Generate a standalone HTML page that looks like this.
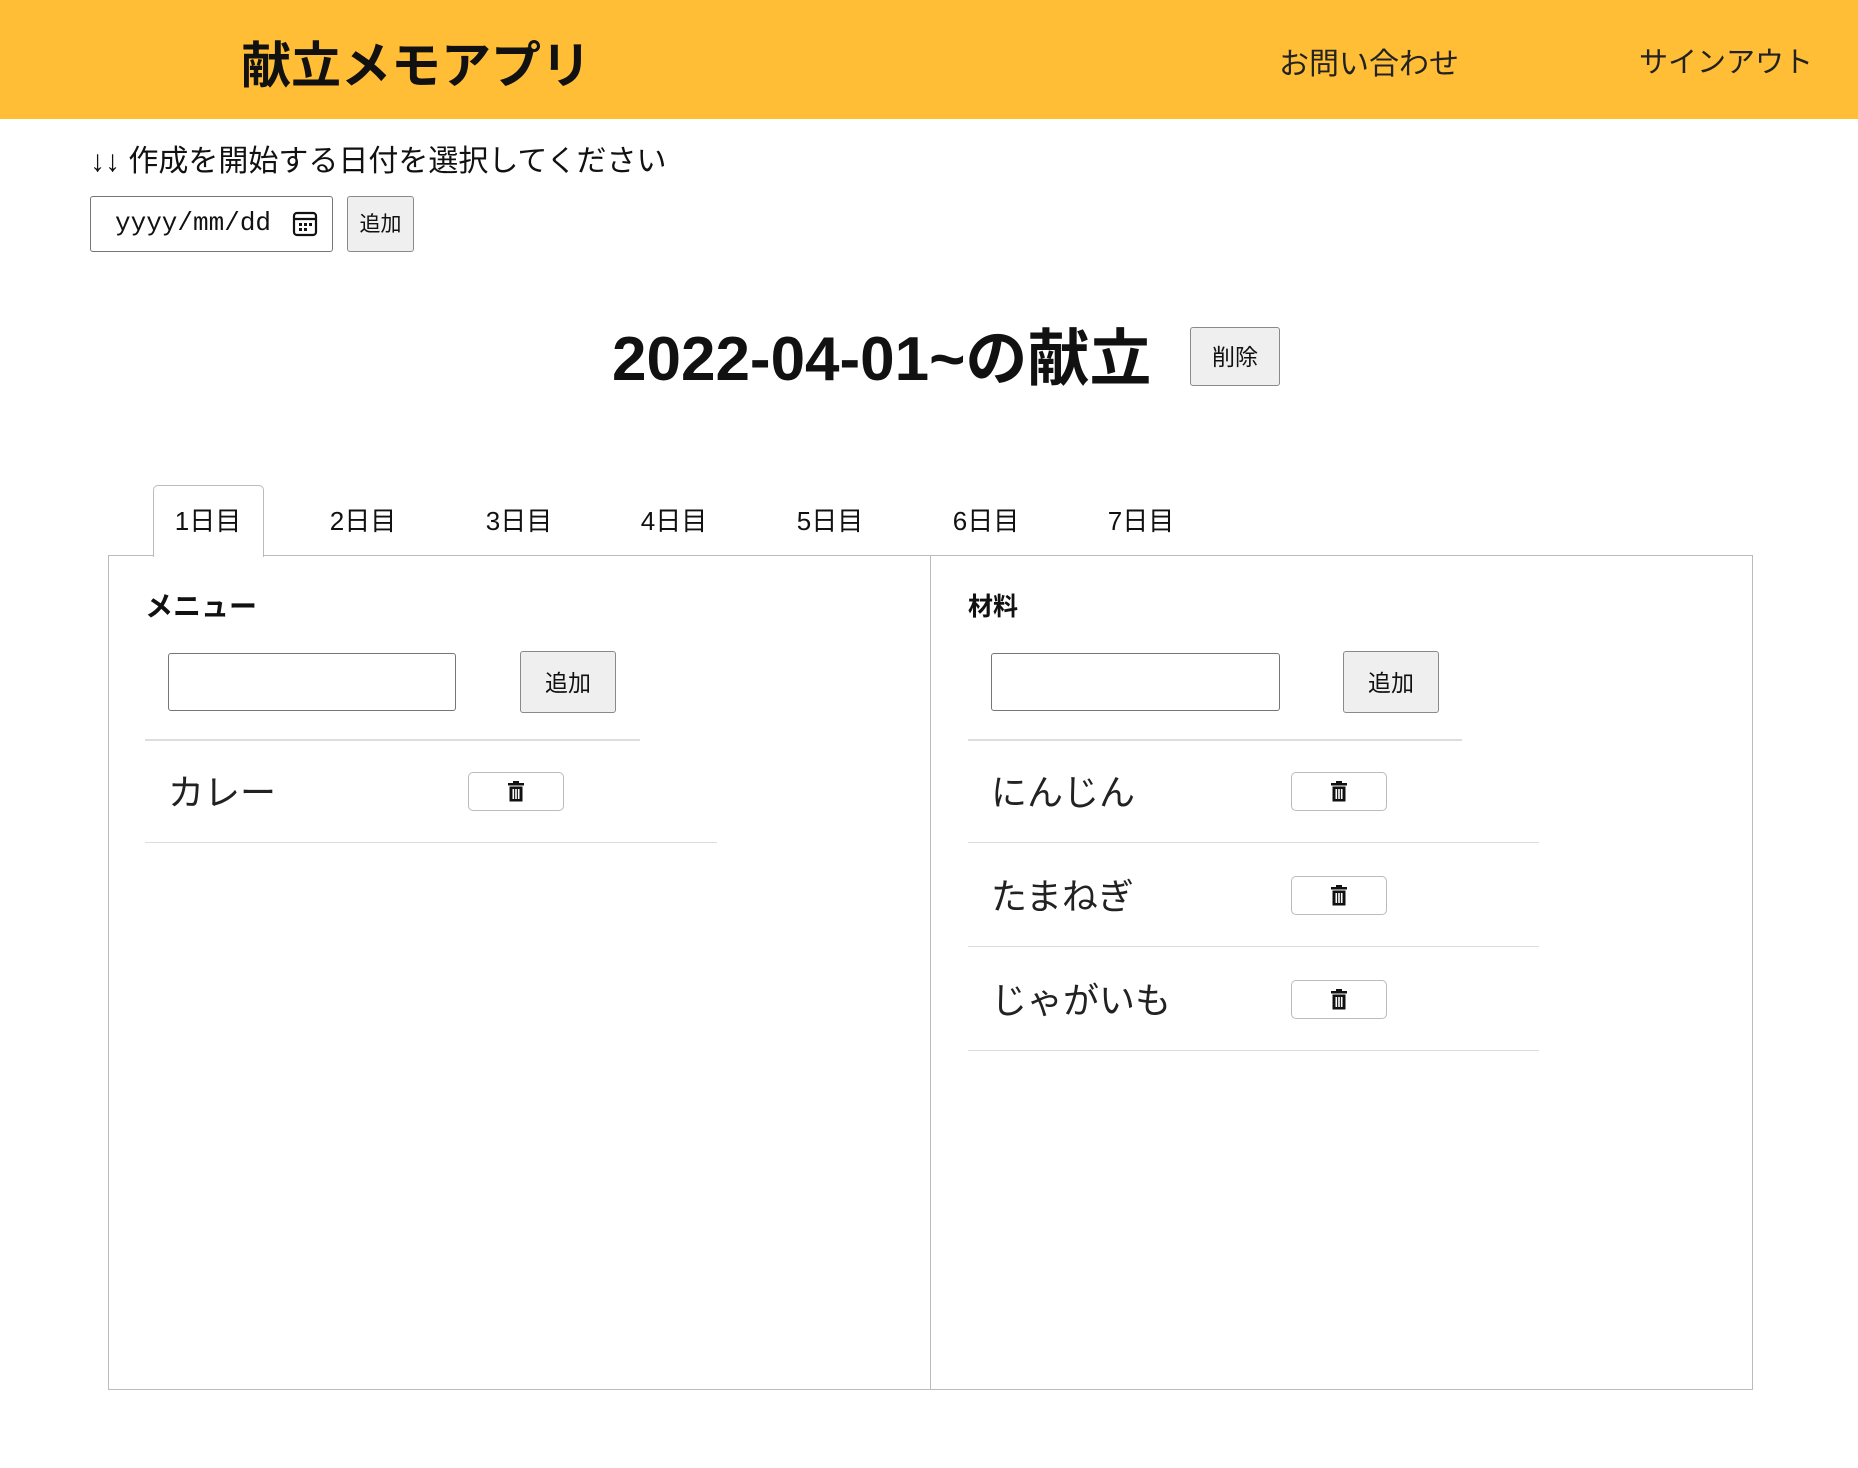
<!DOCTYPE html>
<html><head><meta charset="utf-8"><style>
*{box-sizing:border-box;margin:0;padding:0}
body{width:1858px;height:1468px;position:relative;background:#fff;font-family:"Liberation Sans","Noto Sans CJK JP",sans-serif;color:#111;overflow:hidden}
.a{position:absolute;white-space:nowrap}
.hdr{position:absolute;left:0;top:0;width:1858px;height:119px;background:#FFBE35}
.btn{position:absolute;background:#efefef;border:1px solid #8a8a8a;border-radius:3px;display:flex;align-items:center;justify-content:center;font-size:23px;color:#111;padding-bottom:3px}
.inp{position:absolute;border:1px solid #767676;border-radius:3px;background:#fff}
.hr{position:absolute;height:2px;background:#ddd}
.tb{position:absolute;background:#fff;border:1px solid #bbb;border-radius:5px;display:flex;align-items:center;justify-content:center}
.tab{position:absolute;top:501px;font-size:26px;width:110px;text-align:center}
.it{position:absolute;font-size:36px;color:#222}
</style></head><body>
<div class="hdr"></div>
<div class="a" style="left:241px;top:26px;font-size:50px;font-weight:bold">献立メモアプリ</div>
<div class="a" style="left:1279px;top:39px;font-size:30px;color:#222">お問い合わせ</div>
<div class="a" style="left:1639px;top:39px;font-size:29px;color:#222">サインアウト</div>
<div class="a" style="left:90px;top:136px;font-size:30px">↓↓ 作成を開始する日付を選択してください</div>
<div class="inp" style="left:90px;top:196px;width:243px;height:56px"></div>
<div class="a" style="left:115px;top:208px;font-size:26px;font-family:'Liberation Mono',monospace">yyyy/mm/dd</div>
<svg class="a" style="left:292px;top:211px" width="26" height="26" viewBox="0 0 26 26"><rect x="2" y="2" width="22" height="22" rx="3" fill="none" stroke="#111" stroke-width="2.2"/><line x1="2" y1="8" x2="24" y2="8" stroke="#111" stroke-width="2.2"/><g fill="#111"><rect x="7" y="12" width="3" height="3"/><rect x="12" y="12" width="3" height="3"/><rect x="17" y="12" width="3" height="3"/><rect x="7" y="17" width="3" height="3"/><rect x="12" y="17" width="3" height="3"/></g></svg>
<div class="btn" style="left:347px;top:196px;width:67px;height:56px;font-size:21px">追加</div>
<div class="a" style="left:612px;top:308px;font-size:62px;font-weight:bold">2022-04-01~の献立</div>
<div class="btn" style="left:1190px;top:327px;width:90px;height:59px">削除</div>
<div style="position:absolute;left:108px;top:555px;width:1645px;height:835px;border:1px solid #bbb"></div>
<div style="position:absolute;left:930px;top:555px;width:1px;height:835px;background:#bbb"></div>
<div style="position:absolute;left:153px;top:485px;width:111px;height:72px;border:1px solid #bbb;border-bottom:none;border-radius:5px 5px 0 0;background:#fff"></div>
<div class="tab" style="left:153px">1日目</div>
<div class="tab" style="left:308px">2日目</div>
<div class="tab" style="left:464px">3日目</div>
<div class="tab" style="left:619px">4日目</div>
<div class="tab" style="left:775px">5日目</div>
<div class="tab" style="left:931px">6日目</div>
<div class="tab" style="left:1086px">7日目</div>
<div class="a" style="left:145px;top:585px;font-size:28px;font-weight:bold">メニュー</div>
<div class="inp" style="left:168px;top:653px;width:288px;height:58px"></div>
<div class="btn" style="left:520px;top:651px;width:96px;height:62px">追加</div>
<div class="hr" style="left:145px;top:739px;width:495px"></div>
<div class="it" style="left:168px;top:764px">カレー</div>
<div class="hr" style="left:145px;top:842px;width:572px;height:1px"></div>
<div class="a" style="left:968px;top:587px;font-size:25px;font-weight:bold">材料</div>
<div class="inp" style="left:991px;top:653px;width:289px;height:58px"></div>
<div class="btn" style="left:1343px;top:651px;width:96px;height:62px">追加</div>
<div class="hr" style="left:968px;top:739px;width:494px"></div>
<div class="it" style="left:991px;top:764px">にんじん</div>
<div class="hr" style="left:968px;top:842px;width:571px;height:1px"></div>
<div class="it" style="left:991px;top:868px">たまねぎ</div>
<div class="hr" style="left:968px;top:946px;width:571px;height:1px"></div>
<div class="it" style="left:991px;top:972px">じゃがいも</div>
<div class="hr" style="left:968px;top:1050px;width:571px;height:1px"></div>
<svg width="0" height="0" style="position:absolute"><defs><g id="tr"><rect x="1" y="2" width="16" height="2.5" fill="#111"/><rect x="6" y="0" width="6" height="2.5" fill="#111"/><path d="M2.5 5.5h13v15h-13z" fill="#111"/><rect x="5.5" y="8" width="1.6" height="10" fill="#fff"/><rect x="8.2" y="8" width="1.6" height="10" fill="#fff"/><rect x="10.9" y="8" width="1.6" height="10" fill="#fff"/></g></defs></svg>
<div class="tb" style="left:468px;top:772px;width:96px;height:39px"><svg width="18" height="21"><use href="#tr"/></svg></div>
<div class="tb" style="left:1291px;top:772px;width:96px;height:39px"><svg width="18" height="21"><use href="#tr"/></svg></div>
<div class="tb" style="left:1291px;top:876px;width:96px;height:39px"><svg width="18" height="21"><use href="#tr"/></svg></div>
<div class="tb" style="left:1291px;top:980px;width:96px;height:39px"><svg width="18" height="21"><use href="#tr"/></svg></div>
</body></html>
